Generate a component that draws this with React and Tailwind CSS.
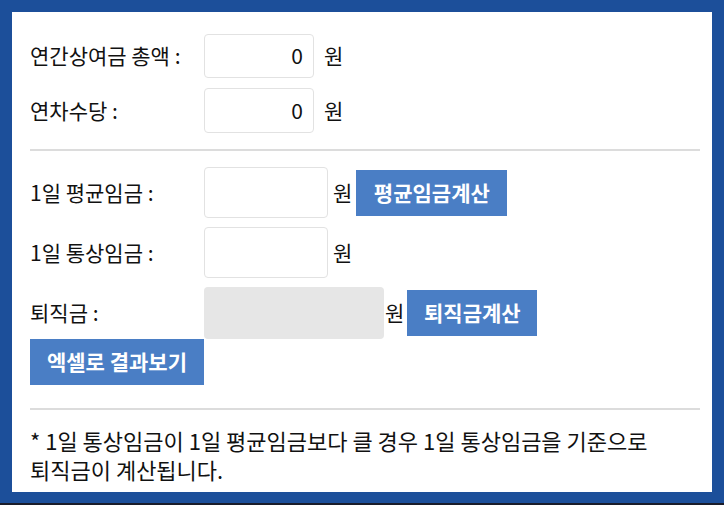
export default function App() {
  const font = { fontFamily: '"Noto Sans CJK KR", "Noto Sans", sans-serif' };
  const btn =
    "h-[46px] bg-[#4a7ec5] text-white font-bold text-[21px] flex items-center justify-center";
  return (
    <div
      className="w-[724px] h-[505px] bg-[#1a1c2a] text-[#111] text-[21px]"
      style={font}
    >
      <div className="h-[503px] bg-[#1c4f9a] pt-[12px] pl-[12px] pr-[12px] pb-[11px]">
        <div className="h-[480px] bg-white pl-[18px] pr-[12px] pt-[22px]">
          {/* Row 1 */}
          <div className="flex items-center h-[44px]">
            <div className="w-[174px]">연간상여금 총액 :</div>
            <div className="w-[110px] h-[44px] border border-[#e2e2e2] rounded-[4px] flex items-center justify-end pr-[10px]">
              0
            </div>
            <div className="ml-[10px]">원</div>
          </div>
          {/* Row 2 */}
          <div className="flex items-center h-[45px] mt-[10px]">
            <div className="w-[174px]">연차수당 :</div>
            <div className="w-[110px] h-[45px] border border-[#e2e2e2] rounded-[4px] flex items-center justify-end pr-[10px]">
              0
            </div>
            <div className="ml-[10px]">원</div>
          </div>
          <div className="mt-[16px] h-[2px] bg-[#dcdcdc]" />
          {/* Row 3 */}
          <div className="flex items-center h-[51px] mt-[16px]">
            <div className="w-[174px]">1일 평균임금 :</div>
            <div className="w-[124px] h-[51px] border border-[#e2e2e2] rounded-[4px]" />
            <div className="ml-[5px]">원</div>
            <div className={`${btn} w-[151px] ml-[4px]`}>평균임금계산</div>
          </div>
          {/* Row 4 */}
          <div className="flex items-center h-[51px] mt-[9px]">
            <div className="w-[174px]">1일 통상임금 :</div>
            <div className="w-[124px] h-[51px] border border-[#e2e2e2] rounded-[4px]" />
            <div className="ml-[5px]">원</div>
          </div>
          {/* Row 5 */}
          <div className="flex items-center h-[52px] mt-[9px]">
            <div className="w-[174px]">퇴직금 :</div>
            <div className="w-[180px] h-[52px] bg-[#e6e6e6] rounded-[4px]" />
            <div className="ml-[1px]">원</div>
            <div className={`${btn} w-[130px] ml-[3px]`}>퇴직금계산</div>
          </div>
          <div className={`${btn} w-[174px]`}>엑셀로 결과보기</div>
          <div className="mt-[23px] h-[2px] bg-[#dcdcdc]" />
          <div className="mt-[16px] leading-[29px] text-[22px]">
            * 1일 통상임금이 1일 평균임금보다 클 경우 1일 통상임금을 기준으로
            <br />
            퇴직금이 계산됩니다.
          </div>
        </div>
      </div>
    </div>
  );
}
